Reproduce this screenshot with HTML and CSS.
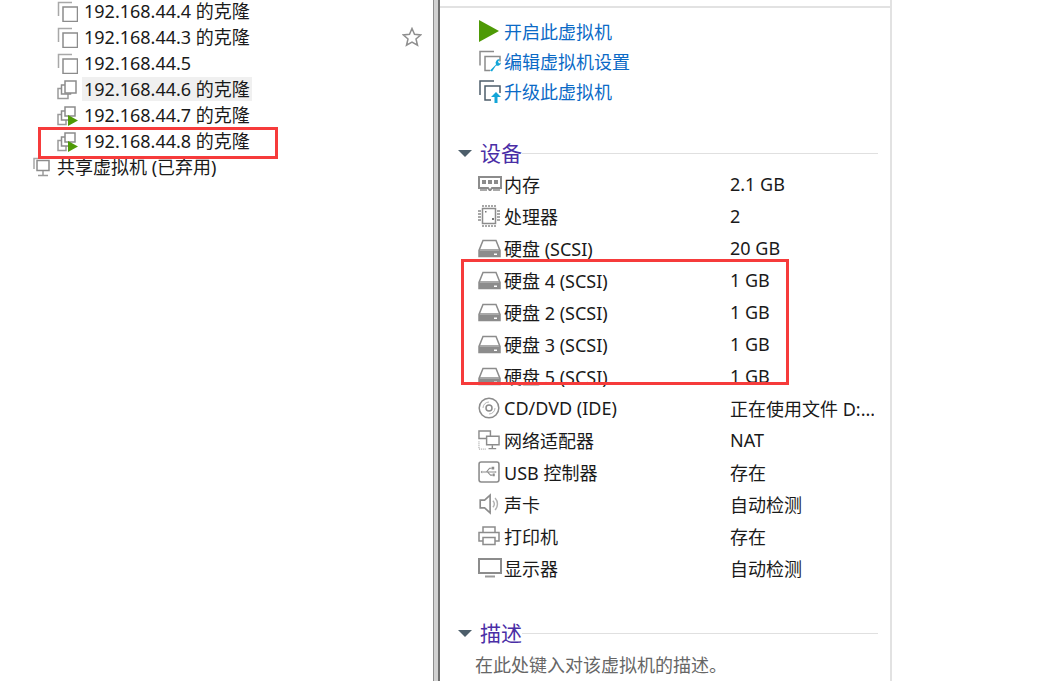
FILE: index.html
```html
<!DOCTYPE html>
<html lang="zh-CN">
<head>
<meta charset="utf-8">
<title>虚拟机详情</title>
<link rel="stylesheet" href="styles.css">
</head>
<body>
<svg class="defs" width="0" height="0">
  <symbol id="clone" viewBox="0 0 21 21"><path d="M15 1.5H1.5V15" fill="none" stroke="#a8a8a8" stroke-width="1.5"/><path d="M6 15V6h14.5v14.500H6z" fill="#fff" stroke="#8c8c8c" stroke-width="1.500"/></symbol>
  <symbol id="group" viewBox="0 0 21 21"><path d="M1 9.500h10v10H1z" fill="#fff" stroke="#9a9a9a" stroke-width="1.500"/><path d="M4.500 6h9v9h-9z" fill="#fff" stroke="#8c8c8c" stroke-width="1.500"/><path d="M8 2h11v12H8z" fill="#fff" stroke="#8c8c8c" stroke-width="1.500"/></symbol>
  <symbol id="group-run" viewBox="0 0 21 21"><path d="M1 9.500h8v10H1z" fill="#fff" stroke="#9a9a9a" stroke-width="1.500"/><path d="M4.500 6h8v9h-8z" fill="#fff" stroke="#8c8c8c" stroke-width="1.500"/><path d="M8 2h10v9H8z" fill="#fff" stroke="#8c8c8c" stroke-width="1.500"/><path d="M11 10l10 5.500-10 5.500z" fill="#4e9a06"/></symbol>
  <symbol id="shared" viewBox="0 0 17 21"><path d="M5 1.500H1V12" fill="none" stroke="#a8a8a8" stroke-width="1.500"/><path d="M4 3.500h12v10H4z" fill="#fff" stroke="#8c8c8c" stroke-width="1.500"/><path d="M10 14v4M5 18.500h10" stroke="#9a9a9a" stroke-width="1.500"/></symbol>
  <symbol id="star" viewBox="0 0 20 20"><path d="M10 1.500l2.500 5.800 6.300.6-4.800 4.100 1.500 6.200L10 15l-5.500 3.200L6 12 1.200 7.900l6.300-.6z" fill="#fff" stroke="#8f8f8f" stroke-width="1.500"/></symbol>
  <symbol id="play" viewBox="0 0 20 22"><path d="M0 0l20 11L0 22z" fill="#4e9a06"/></symbol>
  <symbol id="edit" viewBox="0 0 22 22"><path d="M15 1H1v14" fill="none" stroke="#8c8c8c" stroke-width="1.500"/><path d="M11 20H6V6h15v5" fill="none" stroke="#8c8c8c" stroke-width="1.500"/><path d="M11 20l6-6a3.500 3.500 0 0 1 4-5l-2 2 1 2 2-1a3.500 3.500 0 0 1-5 3l-4 6z" fill="#12a5d8"/></symbol>
  <symbol id="upgrade" viewBox="0 0 22 23"><path d="M15 1H1v14" fill="none" stroke="#4d5e6b" stroke-width="1.500"/><path d="M12 20H6V6h15v7" fill="none" stroke="#4d5e6b" stroke-width="1.500"/><path d="M17 12l5 5h-3.500v6h-3v-6H12z" fill="#12a5d8"/></symbol>
  <symbol id="memory" viewBox="0 0 24 16"><path d="M1 1h22v11H14l-1.500 2h-1L10 12H1z" fill="#fff" stroke="#8c8c8c" stroke-width="2"/><path d="M4 4h4v4H4zM10 4h4v4h-4zM16 4h4v4h-4z" fill="#8c8c8c"/><path d="M2 14h7M15 14h7" stroke="#8c8c8c" stroke-width="1.500"/></symbol>
  <symbol id="cpu" viewBox="0 0 22 22"><path d="M4.500 3.500h13v15h-13z" fill="#fff" stroke="#8c8c8c" stroke-width="1.500"/><path d="M5 0v2M8 0v2M11 0v2M14 0v2M17 0v2M5 20v2M8 20v2M11 20v2M14 20v2M17 20v2M0 6h3M0 9h3M0 12h3M0 15h3M19 6h3M19 9h3M19 12h3M19 15h3" stroke="#8c8c8c" stroke-width="1.500"/><path d="M14 13h2v2h-2zM7 6h1.500v1.500H7z" fill="#777"/></symbol>
  <symbol id="disk" viewBox="0 0 23 19"><path d="M5 1.500h13l4 10v6H1v-6z" fill="#fff" stroke="#8c8c8c" stroke-width="1.500"/><path d="M1 11h21" stroke="#8c8c8c" stroke-width="1.500"/><path d="M1 12h21v6H1z" fill="#8c8c8c"/><path d="M16 14.500h3v1.500h-3z" fill="#fff"/></symbol>
  <symbol id="cd" viewBox="0 0 22 22"><circle cx="11" cy="11" r="9.800" fill="#fff" stroke="#8c8c8c" stroke-width="1.500"/><circle cx="11" cy="11" r="3" fill="none" stroke="#8c8c8c" stroke-width="1.500"/><path d="M5 11a6 6 0 0 1 6-6M17 11a6 6 0 0 1-6 6" fill="none" stroke="#b5b5b5"/></symbol>
  <symbol id="net" viewBox="0 0 23 21"><path d="M1 1h12v8H1z" fill="#fff" stroke="#8c8c8c" stroke-width="1.500"/><path d="M9 6.500h13v9H9z" fill="#fff" stroke="#8c8c8c" stroke-width="1.500"/><path d="M15 16v3M11 19.500h8" stroke="#8c8c8c" stroke-width="1.500"/><path d="M1 12v8h8" fill="none" stroke="#8c8c8c" stroke-dasharray="1 1"/></symbol>
  <symbol id="usb" viewBox="0 0 21 21"><rect x="1" y="1" width="19" height="19" rx="2" fill="#fff" stroke="#8c8c8c" stroke-width="1.500"/><path d="M4 10.500h12M8 10.500l3-3.500h2M9 10.500l3 3h2" fill="none" stroke="#8c8c8c"/><path d="M13 5.500h2.500V8H13zM4 9l-1.500 1.500L4 12zM14 12h2v2.500h-2zM16 9.500l2 1-2 1z" fill="#8c8c8c"/></symbol>
  <symbol id="sound" viewBox="0 0 18 20"><path d="M1 6.500h4L10 2v16l-5-4.500H1z" fill="#fff" stroke="#8c8c8c" stroke-width="1.500"/><path d="M12.500 7a4 4 0 0 1 0 6M14.500 4.500a8 8 0 0 1 0 11" fill="none" stroke="#b0b0b0" stroke-width="1.300"/></symbol>
  <symbol id="printer" viewBox="0 0 22 20"><path d="M5 6V1h12v5" fill="#fff" stroke="#8c8c8c" stroke-width="1.500"/><path d="M5 15H1V6.500h20V15h-4" fill="#fff" stroke="#8c8c8c" stroke-width="1.500"/><path d="M5 11.500h12v7H5z" fill="#fff" stroke="#8c8c8c" stroke-width="1.500"/></symbol>
  <symbol id="display" viewBox="0 0 24 20"><path d="M1 1h22v14H1z" fill="#fff" stroke="#8c8c8c" stroke-width="2"/><path d="M7 17.500h10v2H7z" fill="#9a9a9a"/></symbol>
</svg>

<div class="app">
  <nav class="tree">
    <ul class="tree-list">
      <li class="tree-row"><svg class="tree-icon"><use href="#clone"/></svg><span class="tree-label">192.168.44.4 的克隆</span></li>
      <li class="tree-row"><svg class="tree-icon"><use href="#clone"/></svg><span class="tree-label">192.168.44.3 的克隆</span></li>
      <li class="tree-row"><svg class="tree-icon"><use href="#clone"/></svg><span class="tree-label">192.168.44.5</span></li>
      <li class="tree-row"><svg class="tree-icon"><use href="#group"/></svg><span class="tree-label is-hover">192.168.44.6 的克隆</span></li>
      <li class="tree-row"><svg class="tree-icon"><use href="#group-run"/></svg><span class="tree-label">192.168.44.7 的克隆</span></li>
      <li class="tree-row"><svg class="tree-icon"><use href="#group-run"/></svg><span class="tree-label">192.168.44.8 的克隆</span></li>
      <li class="tree-row is-root"><svg class="root-icon"><use href="#shared"/></svg><span class="tree-label">共享虚拟机 (已弃用)</span></li>
    </ul>
    <svg class="star"><use href="#star"/></svg>
    <div class="mark mark-tree"></div>
  </nav>

  <div class="splitter"></div>

  <main class="details">
    <ul class="actions">
      <li class="action"><svg class="action-icon play"><use href="#play"/></svg><a class="link">开启此虚拟机</a></li>
      <li class="action"><svg class="action-icon"><use href="#edit"/></svg><a class="link">编辑虚拟机设置</a></li>
      <li class="action"><svg class="action-icon"><use href="#upgrade"/></svg><a class="link">升级此虚拟机</a></li>
    </ul>

    <section class="section devices">
      <h2 class="section-head"><span class="caret"></span><span class="section-title">设备</span><span class="rule"></span></h2>
      <ul class="device-list">
        <li class="device"><span class="device-name"><svg class="dev-icon dev-memory"><use href="#memory"/></svg>内存</span><span class="device-value">2.1 GB</span></li>
        <li class="device"><span class="device-name"><svg class="dev-icon"><use href="#cpu"/></svg>处理器</span><span class="device-value">2</span></li>
        <li class="device"><span class="device-name"><svg class="dev-icon dev-disk"><use href="#disk"/></svg>硬盘 (SCSI)</span><span class="device-value">20 GB</span></li>
        <li class="device"><span class="device-name"><svg class="dev-icon dev-disk"><use href="#disk"/></svg>硬盘 4 (SCSI)</span><span class="device-value">1 GB</span></li>
        <li class="device"><span class="device-name"><svg class="dev-icon dev-disk"><use href="#disk"/></svg>硬盘 2 (SCSI)</span><span class="device-value">1 GB</span></li>
        <li class="device"><span class="device-name"><svg class="dev-icon dev-disk"><use href="#disk"/></svg>硬盘 3 (SCSI)</span><span class="device-value">1 GB</span></li>
        <li class="device"><span class="device-name"><svg class="dev-icon dev-disk"><use href="#disk"/></svg>硬盘 5 (SCSI)</span><span class="device-value">1 GB</span></li>
        <li class="device"><span class="device-name"><svg class="dev-icon"><use href="#cd"/></svg>CD/DVD (IDE)</span><span class="device-value">正在使用文件 D:...</span></li>
        <li class="device"><span class="device-name"><svg class="dev-icon"><use href="#net"/></svg>网络适配器</span><span class="device-value">NAT</span></li>
        <li class="device"><span class="device-name"><svg class="dev-icon"><use href="#usb"/></svg>USB 控制器</span><span class="device-value">存在</span></li>
        <li class="device"><span class="device-name"><svg class="dev-icon"><use href="#sound"/></svg>声卡</span><span class="device-value">自动检测</span></li>
        <li class="device"><span class="device-name"><svg class="dev-icon"><use href="#printer"/></svg>打印机</span><span class="device-value">存在</span></li>
        <li class="device"><span class="device-name"><svg class="dev-icon dev-display"><use href="#display"/></svg>显示器</span><span class="device-value">自动检测</span></li>
      </ul>
      <div class="mark mark-disks"></div>
    </section>

    <section class="section description">
      <h2 class="section-head"><span class="caret"></span><span class="section-title">描述</span><span class="rule"></span></h2>
      <p class="desc-text">在此处键入对该虚拟机的描述。</p>
    </section>
  </main>
</div>
</body>
</html>
```

FILE: styles.css
```css
* { box-sizing: border-box; }
html, body { margin: 0; height: 100%; overflow: hidden; background: #fff; }
body {
  font-family: "Noto Sans", "Noto Sans CJK SC", sans-serif;
  font-size: 18px;
  color: #1a1a1a;
}
ul { list-style: none; margin: 0; padding: 0; }
h2, p { margin: 0; font-weight: 400; }
.defs { position: absolute; }

.app { display: flex; width: 1037px; height: 681px; overflow: hidden; }

/* left tree */
.tree { position: relative; width: 433px; flex: none; padding: 0 0 0 57px; }
.tree-list { margin-top: -2px; }
.tree-row { display: flex; align-items: center; height: 26px; line-height: 26px; white-space: nowrap; }
.tree-icon { width: 21px; height: 21px; flex: none; margin-right: 6px; }
.tree-label { display: block; height: 24px; line-height: 24px; }
.tree-label.is-hover { background: #f0f0f0; margin-left: -2px; padding-left: 2px; padding-right: 2px; }
.tree-row.is-root { margin-left: -24px; }
.root-icon { width: 17px; height: 21px; flex: none; margin-right: 7px; }
.star { position: absolute; left: 402px; top: 27px; width: 20px; height: 20px; }
.mark { position: absolute; border: 3px solid #f63b3b; pointer-events: none; }
.mark-tree { left: 38px; top: 127px; width: 240px; height: 32px; }

/* splitter */
.splitter {
  width: 7px; flex: none;
  background: #d2d2d2;
  border-left: 1px solid #8e8e8e;
  border-right: 2px solid #6f6f6f;
}

/* right pane */
.details {
  width: 452px; flex: none; height: 681px;
  border-right: 2px solid #e2e2e2;
  padding: 6px 12px 0 18px;
  position: relative;
  overflow: hidden;
}
.details::before {
  content: ""; display: block; height: 2px; background: #e2e2e2;
  margin: 0 -12px 0 -18px;
}
.actions { padding: 8px 0 0 21px; }
.action { display: flex; align-items: center; height: 30px; }
.action-icon { width: 22px; height: 23px; flex: none; margin-right: 3px; }
.action-icon.play { width: 20px; height: 22px; margin-right: 5px; }
.link { color: #0b6ac6; }

.section-head {
  display: flex; align-items: center;
  height: 28px; font-size: 20px; line-height: 28px;
}
.caret {
  width: 0; height: 0; flex: none; margin-right: 8px;
  border-left: 7px solid transparent; border-right: 7px solid transparent;
  border-top: 7px solid #4d5e6b;
}
.section-title { color: #4a2ea6; font-size: 21px; }
.rule { flex: 1; height: 1px; background: #e0e0e0; }

.section.devices { margin-top: 33px; position: relative; }
.device-list { padding: 1px 0 0 20px; }
.device { display: flex; align-items: center; height: 32px; white-space: nowrap; }
.device-name { display: flex; align-items: center; width: 252px; flex: none; }
.device-value { width: 144px; overflow: hidden; text-overflow: clip; }
.dev-icon { width: 22px; height: 22px; flex: none; margin-right: 4px; }
.dev-memory { height: 16px; width: 24px; margin-right: 2px; }
.dev-disk { width: 23px; height: 19px; margin-right: 3px; }
.dev-display { width: 24px; height: 20px; margin-right: 2px; }
.mark-disks { left: 3px; top: 120px; width: 328px; height: 126px; }

.section.description { margin-top: 35px; }
.desc-text { color: #666; padding: 3px 0 0 17px; line-height: 30px; }
```
